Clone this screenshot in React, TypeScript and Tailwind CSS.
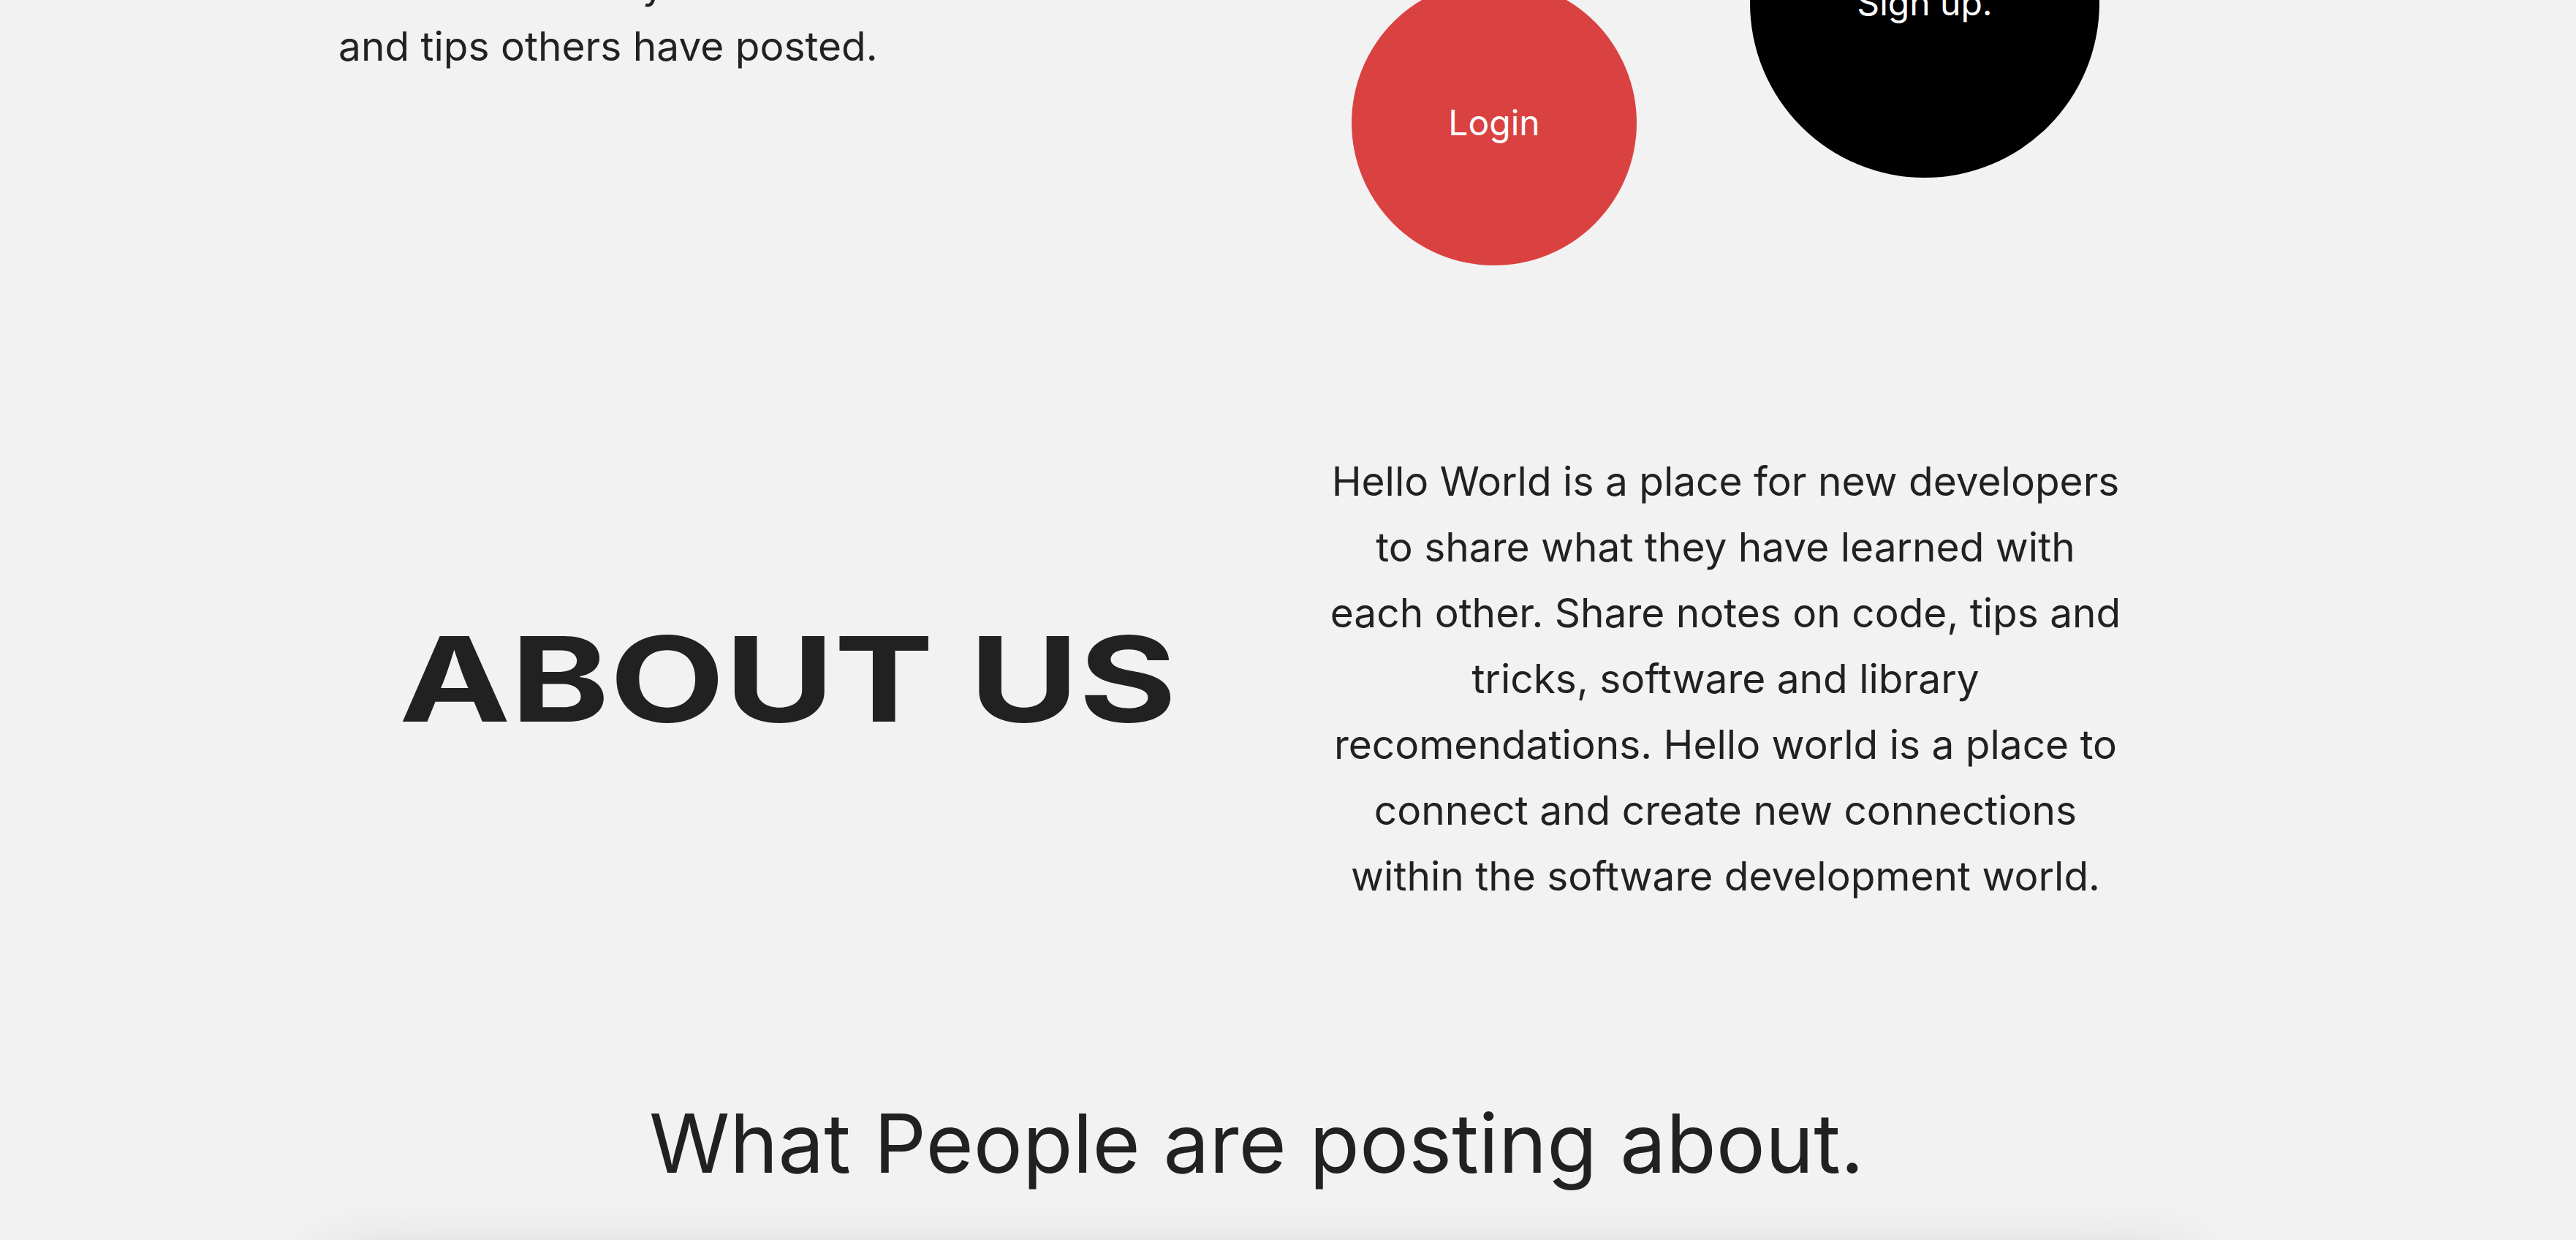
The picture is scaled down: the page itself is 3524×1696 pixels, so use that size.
import React from "react";

const aboutLines = [
  "Hello World is a place for new developers",
  "to share what they have learned with",
  "each other. Share notes on code, tips and",
  "tricks, software and library",
  "recomendations. Hello world is a place to",
  "connect and create new connections",
  "within the software development world.",
];

export default function App() {
  return (
    <div className="h-[1696px] overflow-hidden bg-[#f2f2f2] font-['Inter',sans-serif] text-[#212121]">
      <div className="ml-[436px] w-[2566px]">
        {/* hero - page is scrolled so the top is cut off */}
        <section className="-mt-[235px] grid grid-cols-2">
          <div className="pl-[27px] pt-[171px] text-[55px] leading-[85px]">
            <p>Look at the many code notes</p>
            <p>and tips others have posted.</p>
          </div>
          <div className="flex items-start justify-center gap-[155px]">
            <button className="mt-[208px] flex h-[390px] w-[390px] items-center justify-center rounded-full bg-[#da4242] text-[48px] text-white">
              Login
            </button>
            <button className="flex h-[478px] w-[478px] items-center justify-center rounded-full bg-black text-[48px] text-white">
              Sign up.
            </button>
          </div>
        </section>

        <section className="mt-[250px] grid grid-cols-2 items-center">
          <h2 className="text-center text-[161px] font-bold leading-none">
            <span className="inline-block scale-x-[1.27]">ABOUT US</span>
          </h2>
          <p className="text-center text-[55px] leading-[90px]">
            {aboutLines.map((line) => (
              <span key={line} className="block">
                {line}
              </span>
            ))}
          </p>
        </section>

        <h2 className="mt-[264px] text-center text-[112px] leading-none">
          What People are posting about.
        </h2>

        <div className="mt-[116px] h-[600px] rounded-[40px] bg-[#f2f2f2] shadow-[0_0_100px_rgba(0,0,0,0.2)]" />
      </div>
    </div>
  );
}
